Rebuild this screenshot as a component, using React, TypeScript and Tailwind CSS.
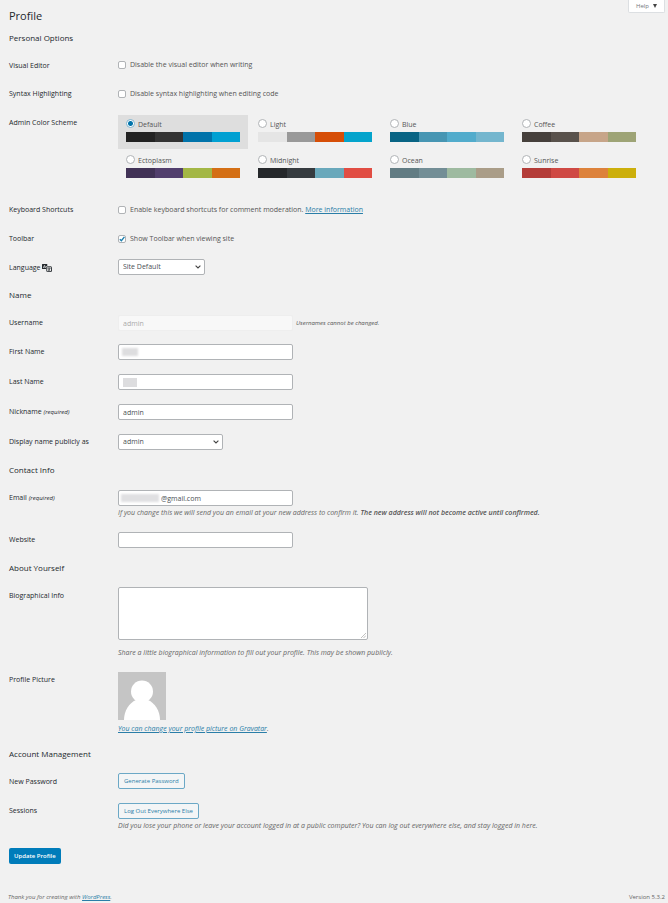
import type { ReactNode } from "react";

const schemes = [
  { name: "Default", colors: ["#222222", "#333333", "#0073aa", "#00a0d2"] },
  { name: "Light", colors: ["#e5e5e5", "#999999", "#d64e07", "#04a4cc"] },
  { name: "Blue", colors: ["#096484", "#4796b3", "#52accc", "#74b6ce"] },
  { name: "Coffee", colors: ["#46403c", "#59524c", "#c7a589", "#9ea476"] },
  { name: "Ectoplasm", colors: ["#413256", "#523f6d", "#a3b745", "#d46f15"] },
  { name: "Midnight", colors: ["#25282b", "#363b3f", "#69a8bb", "#e14d43"] },
  { name: "Ocean", colors: ["#627c83", "#738e96", "#9ebaa0", "#aa9d88"] },
  { name: "Sunrise", colors: ["#b43c38", "#cf4944", "#dd823b", "#ccaf0b"] },
];

const field =
  "block h-4 w-[175px] rounded-xs border border-[#b0b3b6] bg-white px-1 text-[7px] text-[#4a4f54] outline-none focus:border-[#007cba]";
const outlineButton =
  "block h-4 cursor-pointer rounded-xs border border-[#6ba8c6] bg-[#f3f5f6] px-[5px] text-[6px] leading-[14px] font-medium text-[#2a7ea8]";
const link = "text-[#2a7ea8] underline";

function Heading({ children }: { children: ReactNode }) {
  return <h2 className="text-[8px] leading-[26px] font-medium text-[#23282d]">{children}</h2>;
}

function Row({
  label,
  htmlFor,
  id,
  className = "py-[7px]",
  children,
}: {
  label: ReactNode;
  htmlFor?: string;
  id?: string;
  className?: string;
  children: ReactNode;
}) {
  const labelStyle = "block w-[109px] shrink-0 pt-[9px] text-[7px] leading-3 font-medium text-[#23282d]";
  return (
    <div className="flex items-start">
      {htmlFor ? (
        <label htmlFor={htmlFor} className={labelStyle}>
          {label}
        </label>
      ) : (
        <span id={id} className={labelStyle}>
          {label}
        </span>
      )}
      <div className={`min-w-0 flex-1 ${className}`}>{children}</div>
    </div>
  );
}

function Required() {
  return <em className="text-[6px]">(required)</em>;
}

function Description({ className = "mt-px", children }: { className?: string; children: ReactNode }) {
  return <p className={`text-[7px] leading-3 text-[#666] italic ${className}`}>{children}</p>;
}

function Check({ id, checked = false, children }: { id: string; checked?: boolean; children: ReactNode }) {
  return (
    <div className="flex h-[13px] items-center gap-1">
      <span className="relative flex size-2">
        <input
          id={id}
          type="checkbox"
          defaultChecked={checked}
          className="peer size-2 appearance-none rounded-xs border border-[#b0b3b6] bg-white"
        />
        <svg
          viewBox="0 0 8 8"
          className="pointer-events-none absolute inset-0 hidden size-2 peer-checked:block"
          fill="none"
          stroke="#1e7fae"
          strokeWidth="1.4"
        >
          <path d="M1.8 4.2 3.4 5.8 6.4 1.9" />
        </svg>
      </span>
      <div className="text-[7px] leading-[13px] text-[#555]">{children}</div>
    </div>
  );
}

function Select({ id, width, options }: { id: string; width: string; options: string[] }) {
  return (
    <div className={`relative ${width}`}>
      <select
        id={id}
        className="block h-4 w-full appearance-none rounded-xs border border-[#b0b3b6] bg-white pr-4 pl-1 text-[7px] text-[#4a4f54] outline-none"
      >
        {options.map((o) => (
          <option key={o}>{o}</option>
        ))}
      </select>
      <svg
        viewBox="0 0 6 4"
        className="pointer-events-none absolute top-1.5 right-1 h-1 w-1.5"
        fill="none"
        stroke="#444"
        strokeWidth="1.1"
      >
        <path d="M.6.6 3 3 5.4.6" />
      </svg>
    </div>
  );
}

function TranslationIcon() {
  return (
    <svg viewBox="0 0 20 16" className="inline-block h-2 w-2.5 align-middle" fill="none">
      <path d="M1 0h9.500v4h-2v6H1a1 1 0 0 1-1-1V1a1 1 0 0 1 1-1z" fill="#23282d" />
      <path d="M2.500 8 5 2.500 7.500 8M3.500 6.300h3" stroke="#f1f1f1" strokeWidth="1.300" />
      <rect x="9.500" y="5.500" width="9.500" height="9.700" rx="1" stroke="#23282d" strokeWidth="1.800" />
      <path d="M11.500 8.500h5.500M14.200 7v1.500M16 8.500c-.5 2.500-2 4-4 5M12.500 9.500c.5 1.700 2 3.200 4 4" stroke="#23282d" strokeWidth="1.300" />
    </svg>
  );
}

export default function App() {
  return (
    <div className="min-h-screen bg-[#f1f1f1] font-['Open_Sans','Noto_Sans',sans-serif] text-[7px] text-[#555]">
      <div className="relative pl-[9px]">
        <button
          type="button"
          className="absolute top-0 right-[3px] flex h-[13px] items-center gap-1 rounded-b-xs border border-t-0 border-[#dcdfe2] bg-white px-[7px] text-[6px] text-[#72777c]"
        >
          Help
          <svg viewBox="0 0 4 4" className="size-1" fill="#444">
            <path d="M0 0h4L2 4z" />
          </svg>
        </button>

        <h1 className="pt-1.5 text-[11px] leading-[19px] text-[#23282d]">Profile</h1>

        <form onSubmit={(e) => e.preventDefault()}>
          <Heading>Personal Options</Heading>
          <Row label="Visual Editor" htmlFor="rich_editing" className="pt-[7px] pb-2">
            <Check id="rich_editing">
              <label htmlFor="rich_editing">Disable the visual editor when writing</label>
            </Check>
          </Row>
          <Row label="Syntax Highlighting" htmlFor="syntax" className="py-2">
            <Check id="syntax">
              <label htmlFor="syntax">Disable syntax highlighting when editing code</label>
            </Check>
          </Row>
          <Row label="Admin Color Scheme" id="scheme-label" className="pt-[7px] pb-2.5">
            <div role="radiogroup" aria-labelledby="scheme-label" className="grid max-w-[526px] grid-cols-4 gap-0.5">
              {schemes.map((s) => (
                <label key={s.name} className="block px-2 pt-1 pb-[7px] has-checked:bg-[#dedede]">
                  <span className="flex h-[13px] items-start gap-[3px] text-[7px] leading-[11px]">
                    <input
                      type="radio"
                      name="scheme"
                      defaultChecked={s.name === "Default"}
                      className="size-[9px] appearance-none rounded-full border border-[#b0b3b6] bg-white checked:border-[#7fb2cc] checked:bg-[radial-gradient(circle,#0073aa_2px,#fff_3px)]"
                    />
                    {s.name}
                  </span>
                  <span className="grid h-2.5 grid-cols-4">
                    {s.colors.map((c) => (
                      <span key={c} style={{ backgroundColor: c }} />
                    ))}
                  </span>
                </label>
              ))}
            </div>
          </Row>
          <Row label="Keyboard Shortcuts" htmlFor="shortcuts" className="py-2">
            <Check id="shortcuts">
              <label htmlFor="shortcuts">Enable keyboard shortcuts for comment moderation.</label>{" "}
              <a href="#shortcuts-info" className={link}>
                More information
              </a>
            </Check>
          </Row>
          <Row label="Toolbar" htmlFor="toolbar" className="py-2">
            <Check id="toolbar" checked>
              <label htmlFor="toolbar">Show Toolbar when viewing site</label>
            </Check>
          </Row>
          <Row
            label={
              <>
                Language <TranslationIcon />
              </>
            }
            htmlFor="locale"
            className="pt-1.5 pb-[7px]"
          >
            <Select id="locale" width="w-[87px]" options={["Site Default", "English (United States)"]} />
          </Row>

          <Heading>Name</Heading>
          <Row label="Username" htmlFor="username" className="pt-[7px] pb-1.5">
            <div className="flex items-center gap-[3px]">
              <input
                id="username"
                disabled
                defaultValue="admin"
                className="block h-4 w-[175px] rounded-xs border border-[#eeeeee] bg-[#f8f8f8] px-1 text-[7px] text-[#aaa]"
              />
              <span className="text-[6px] italic">Usernames cannot be changed.</span>
            </div>
          </Row>
          <Row label="First Name" htmlFor="first">
            <div className="relative">
              <input id="first" className={field} />
              <span className="pointer-events-none absolute top-1 left-1 h-2 w-4 bg-[#dddddf] blur-[1px]" />
            </div>
          </Row>
          <Row label="Last Name" htmlFor="last">
            <div className="relative">
              <input id="last" className={field} />
              <span className="pointer-events-none absolute top-1 left-[5px] h-[9px] w-3.5 bg-[#dddddf]" />
            </div>
          </Row>
          <Row
            label={
              <>
                Nickname <Required />
              </>
            }
            htmlFor="nick"
          >
            <input id="nick" defaultValue="admin" className={field} />
          </Row>
          <Row label="Display name publicly as" htmlFor="display">
            <Select id="display" width="w-[105px]" options={["admin"]} />
          </Row>

          <Heading>Contact Info</Heading>
          <Row
            label={
              <>
                Email <Required />
              </>
            }
            htmlFor="email"
            className="pt-[7px] pb-1.5"
          >
            <div className="relative">
              <input id="email" defaultValue="@gmail.com" className={`${field} pl-[42px]`} />
              <span className="pointer-events-none absolute top-1 left-[3px] h-2 w-[38px] bg-[#e0e0e2] blur-[1px]" />
            </div>
            <Description>
              If you change this we will send you an email at your new address to confirm it.{" "}
              <strong className="font-semibold text-[#555]">
                The new address will not become active until confirmed.
              </strong>
            </Description>
          </Row>
          <Row label="Website" htmlFor="website">
            <input id="website" className={field} />
          </Row>

          <Heading>About Yourself</Heading>
          <Row label="Biographical Info" htmlFor="bio" className="py-1.5">
            <div className="relative w-[250px]">
              <textarea
                id="bio"
                className="block h-[53px] w-full resize-none rounded-xs border border-[#b0b3b6] bg-white px-1 text-[7px] outline-none"
              />
              <svg
                viewBox="0 0 5 5"
                className="pointer-events-none absolute right-0.5 bottom-0.5 size-[5px]"
                stroke="#999"
                strokeWidth=".6"
              >
                <path d="M0 5 5 0M2.500 5 5 2.500" />
              </svg>
            </div>
            <Description className="mt-[7px]">
              Share a little biographical information to fill out your profile. This may be shown publicly.
            </Description>
          </Row>
          <Row label="Profile Picture" className="pt-[7px] pb-1.5">
            <svg viewBox="0 0 48 48" className="block size-12" role="img" aria-label="Profile picture">
              <path d="M0 0h48v48H0z" fill="#c5c5c5" />
              <circle cx="24" cy="19.500" r="11" fill="#fff" />
              <path d="M6 48c0-9 5-17 12-20h12c7 3 12 11 12 20z" fill="#fff" />
            </svg>
            <Description className="mt-[3px]">
              <a href="#gravatar" className={link}>
                You can change your profile picture on Gravatar
              </a>
              .
            </Description>
          </Row>

          <Heading>Account Management</Heading>
          <Row label="New Password" className="pt-1.5 pb-[7px]">
            <button type="button" className={outlineButton}>
              Generate Password
            </button>
          </Row>
          <Row label="Sessions">
            <button type="button" className={outlineButton}>
              Log Out Everywhere Else
            </button>
            <Description>
              Did you lose your phone or leave your account logged in at a public computer? You can log out everywhere
              else, and stay logged in here.
            </Description>
          </Row>
          <button
            type="submit"
            className="mt-[9px] block h-4 cursor-pointer rounded-xs bg-[#007cba] px-[5px] text-[6px] leading-4 font-semibold text-white"
          >
            Update Profile
          </button>
        </form>
      </div>
      <footer className="mt-7 flex justify-between pr-[3px] pl-2 text-[6px] leading-[11px] text-[#666]">
        <p className="italic">
          Thank you for creating with{" "}
          <a href="#wordpress" className={link}>
            WordPress
          </a>
          .
        </p>
        <p>Version 5.3.2</p>
      </footer>
    </div>
  );
}
